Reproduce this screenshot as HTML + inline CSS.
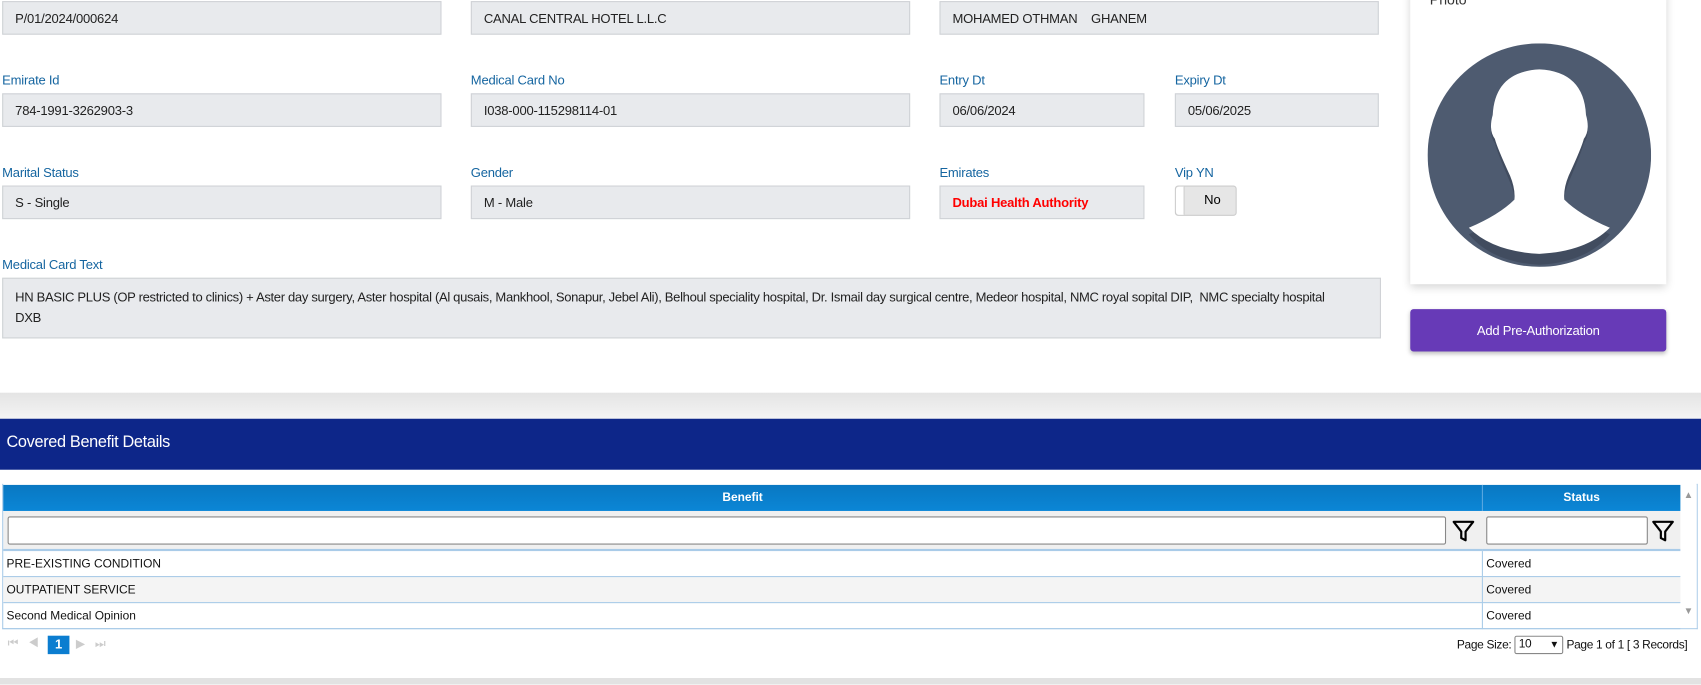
<!DOCTYPE html>
<html><head><meta charset="utf-8"><style>
html,body{margin:0;padding:0;width:1701px;height:684px;overflow:hidden;background:#fff;font-family:"Liberation Sans",Arial,sans-serif;}
#w{position:absolute;left:0;top:0;width:1568px;height:631px;transform:scale(1.08482);transform-origin:0 0;}
.a{position:absolute;box-sizing:border-box;}
.inp{background:#e8eaed;border:1px solid #cfd2d6;font-size:12px;color:#222;padding-left:11px;display:flex;align-items:center;letter-spacing:-0.2px}
.lb{font-size:12px;color:#1565a0;letter-spacing:-0.2px}
.row td{height:23px;border-bottom:1px solid #a9cbe8;font-size:11px;color:#111;padding:0 3px;}
</style></head><body><div id="w">
<div class="a inp" style="left:2px;top:1px;width:405px;height:31px">P/01/2024/000624</div>
<div class="a inp" style="left:434px;top:1px;width:405px;height:31px">CANAL CENTRAL HOTEL L.L.C</div>
<div class="a inp" style="left:866px;top:1px;width:405px;height:31px;white-space:pre">MOHAMED OTHMAN    GHANEM</div>

<div class="a lb" style="left:2px;top:67px">Emirate Id</div>
<div class="a lb" style="left:434px;top:67px">Medical Card No</div>
<div class="a lb" style="left:866px;top:67px">Entry Dt</div>
<div class="a lb" style="left:1083px;top:67px">Expiry Dt</div>
<div class="a inp" style="left:2px;top:86px;width:405px;height:31px">784-1991-3262903-3</div>
<div class="a inp" style="left:434px;top:86px;width:405px;height:31px">I038-000-115298114-01</div>
<div class="a inp" style="left:866px;top:86px;width:189px;height:31px">06/06/2024</div>
<div class="a inp" style="left:1083px;top:86px;width:188px;height:31px">05/06/2025</div>

<div class="a lb" style="left:2px;top:152px">Marital Status</div>
<div class="a lb" style="left:434px;top:152px">Gender</div>
<div class="a lb" style="left:866px;top:152px">Emirates</div>
<div class="a lb" style="left:1083px;top:152px">Vip YN</div>
<div class="a inp" style="left:2px;top:171px;width:405px;height:31px">S - Single</div>
<div class="a inp" style="left:434px;top:171px;width:405px;height:31px">M - Male</div>
<div class="a inp" style="left:866px;top:171px;width:189px;height:31px;color:#f00;font-weight:bold">Dubai Health Authority</div>
<div class="a" style="left:1083px;top:171px;width:57px;height:28px;border:1px solid #ccc;border-radius:3px;background:#e6e6e6;font-size:12px">
<div class="a" style="left:0;top:0;width:8px;height:26px;background:#fff;border-right:1px solid #ccc;border-radius:3px 0 0 3px"></div>
<div class="a" style="left:26px;top:5px">No</div></div>

<div class="a lb" style="left:2px;top:237px">Medical Card Text</div>
<div class="a inp" style="left:2px;top:256px;width:1271px;height:56px;line-height:19px;align-items:center;letter-spacing:-0.3px;font-size:12px"><div>HN BASIC PLUS (OP restricted to clinics) + Aster day surgery, Aster hospital (Al qusais, Mankhool, Sonapur, Jebel Ali), Belhoul speciality hospital, Dr. Ismail day surgical centre, Medeor hospital, NMC royal sopital DIP,&nbsp; NMC specialty hospital<br>DXB</div></div>

<div class="a" style="left:1300px;top:-10px;width:236px;height:272px;background:#fff;box-shadow:0 3px 8px rgba(0,0,0,.18)">
<div class="a" style="left:18px;top:2px;font-size:13px;color:#333">Photo</div>
<svg class="a" style="left:16px;top:50px" width="206" height="206" viewBox="0 0 206 206">
<circle cx="103" cy="103" r="103" fill="#4e5b70"/>
<path d="M38 176 Q60 202 103 204 Q146 202 168 176 Q140 162 126 150 Q125 140 130 128 Q142 100 144 92 Q150 84 146 70 Q144 30 103 26 Q62 30 60 70 Q56 84 62 92 Q64 100 76 128 Q81 140 80 150 Q66 162 38 176 Z" fill="#414c5f"/>
<path d="M38 170 Q60 192 103 194 Q146 192 168 170 Q140 158 126 144 Q125 134 130 122 Q142 96 144 88 Q150 80 146 66 Q144 26 103 24 Q62 26 60 66 Q56 80 62 88 Q64 96 76 122 Q81 134 80 144 Q66 158 38 170 Z" fill="#fff"/>
</svg></div>
<div class="a" style="left:1300px;top:285px;width:236px;height:39px;background:#673ab7;border-radius:3px;box-shadow:0 2px 4px rgba(0,0,0,.25);color:#fff;font-size:12px;display:flex;align-items:center;justify-content:center;letter-spacing:-0.2px">Add Pre-Authorization</div>

<div class="a" style="left:0;top:362px;width:1568px;height:24px;background:linear-gradient(#e4e4e4,#f4f4f4)"></div>
<div class="a" style="left:0;top:386px;width:1568px;height:47px;background:#0d2689;color:#fff;font-size:15px;line-height:44px;padding-left:6px;letter-spacing:-0.3px">Covered Benefit Details</div>

<div class="a" style="left:2px;top:446px;width:1563px;height:134px;border:1px solid #a9cbe8;border-top:none"></div>
<div class="a" style="left:1549px;top:447px;width:15px;height:132px;background:#fff;font-size:9px;color:#999;text-align:center"><div style="margin-top:4px">▲</div><div style="margin-top:97px">▼</div></div>
<table class="a" style="left:3px;top:447px;width:1546px;border-collapse:collapse">
<tr style="height:24px;background:linear-gradient(#0a78c2,#0b86d6);color:#fff;font-size:11px;font-weight:bold;text-align:center"><td style="width:1361px;border-right:1px solid #5aa8e0">Benefit</td><td>Status</td></tr>
<tr style="height:36px;background:#f0f0f0"><td style="position:relative;border-bottom:2px solid #a9cbe8"><div class="a" style="left:4px;top:5px;width:1326px;height:26px;border:1px solid #888;background:#fff;border-radius:2px"></div>
<svg class="a" style="left:1335px;top:7px" width="22" height="22" viewBox="0 0 22 22"><path d="M2 3 H20 L13 12 V20 L9 18 V12 Z" fill="none" stroke="#000" stroke-width="2" stroke-linejoin="round"/></svg></td>
<td style="position:relative;border-bottom:2px solid #a9cbe8"><div class="a" style="left:3px;top:5px;width:149px;height:26px;border:1px solid #888;background:#fff;border-radius:2px"></div>
<svg class="a" style="left:155px;top:7px" width="22" height="22" viewBox="0 0 22 22"><path d="M2 3 H20 L13 12 V20 L9 18 V12 Z" fill="none" stroke="#000" stroke-width="2" stroke-linejoin="round"/></svg></td></tr>
<tr class="row"><td style="border-right:1px solid #a9cbe8">PRE-EXISTING CONDITION</td><td>Covered</td></tr>
<tr class="row" style="background:#f4f4f4"><td style="border-right:1px solid #a9cbe8">OUTPATIENT SERVICE</td><td>Covered</td></tr>
<tr class="row"><td style="border-right:1px solid #a9cbe8">Second Medical Opinion</td><td>Covered</td></tr>
</table>

<div class="a" style="left:7px;top:587px;font-size:11px;color:#ccc;letter-spacing:9px">⏮◀</div>
<div class="a" style="left:44px;top:586px;width:20px;height:17px;background:#0b7dd0;color:#fff;font-size:12px;font-weight:bold;text-align:center;line-height:17px">1</div>
<div class="a" style="left:70px;top:587px;font-size:11px;color:#ccc;letter-spacing:9px">▶⏭</div>
<div class="a" style="left:1343px;top:586px;font-size:11px;color:#111;display:flex;align-items:center;white-space:pre;letter-spacing:-0.3px">Page Size: <span style="display:inline-block;width:40px;height:15px;border:1px solid #888;border-radius:2px;font-size:11px;line-height:15px;padding-left:3px;box-sizing:content-box;margin-right:3px">10 <span style="float:right;margin-right:3px;font-size:9px">▼</span></span>Page 1 of 1 [ 3 Records]</div>

<div class="a" style="left:0;top:625px;width:1568px;height:6px;background:#e2e2e2"></div>
</div></body></html>
